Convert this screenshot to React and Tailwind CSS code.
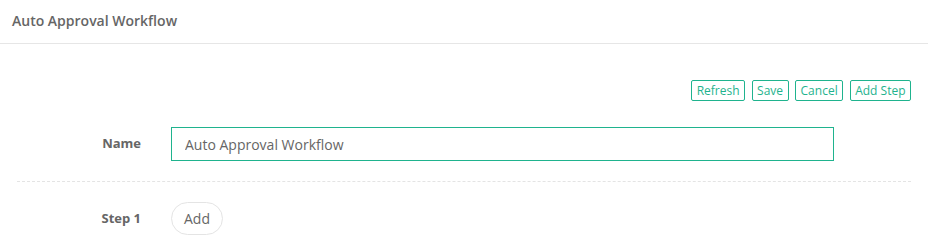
export default function App() {
  const buttons = ["Refresh", "Save", "Cancel", "Add Step"];
  return (
    <div className="w-[928px] h-[251px] bg-white font-['Open_Sans',sans-serif] text-[#666]">
      <div className="h-[44px] border-b border-[#e6e6e6] px-3 flex items-center">
        <h1 className="text-[14px] font-semibold text-[#666] leading-none -mt-[1px]">
          Auto Approval Workflow
        </h1>
      </div>

      <div className="px-[17px]">
        <div className="flex justify-end gap-[6.5px] mt-[36px]">
          {buttons.map((b) => (
            <button
              key={b}
              type="button"
              className="h-[21px] px-[4.5px] border border-[#1fb38e] rounded-[2px] text-[12px] leading-none text-[#1fb38e] bg-white"
            >
              {b}
            </button>
          ))}
        </div>

        <div className="flex items-center mt-[26px]">
          <label className="w-[124px] text-right text-[13px] font-bold text-[#666]">Name</label>
          <input
            className="ml-[30px] w-[663px] h-[34px] border-[1.5px] border-[#1fb38e] px-[13px] text-[14px] text-[#666] outline-none"
            defaultValue="Auto Approval Workflow"
          />
        </div>

        <div className="mt-[20px] border-t border-dashed border-[#e4e4e4]" />

        <div className="flex items-center mt-[20px]">
          <label className="w-[124px] text-right text-[13px] font-bold text-[#666]">Step 1</label>
          <button
            type="button"
            className="ml-[30px] w-[52px] h-[33px] rounded-full border border-[#e4e4e4] text-[14px] text-[#666] bg-white"
          >
            Add
          </button>
        </div>
      </div>
    </div>
  );
}
